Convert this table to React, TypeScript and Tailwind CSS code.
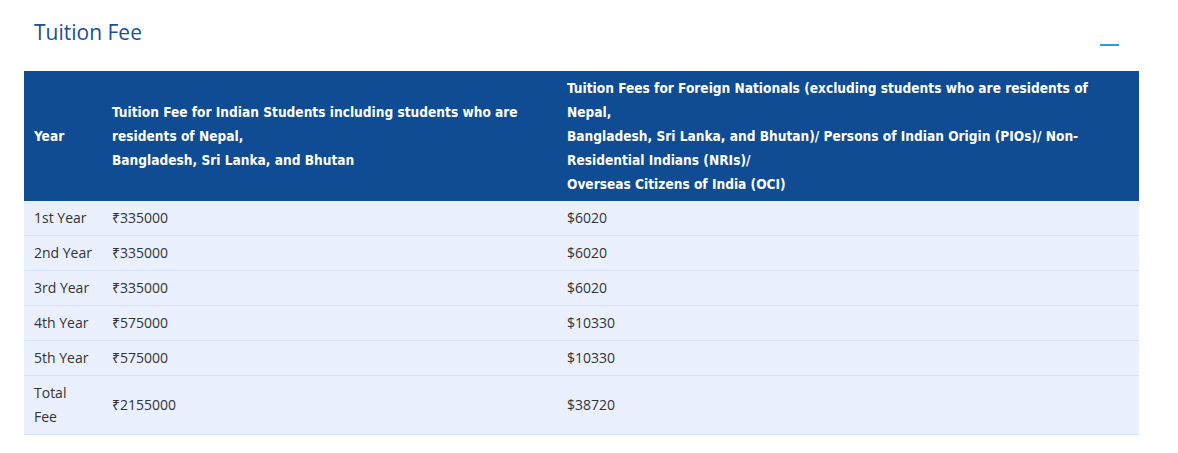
import { Minus } from 'lucide-react'

const ROWS = [
  { year: '1st Year', inr: '₹335000', usd: '$6020' },
  { year: '2nd Year', inr: '₹335000', usd: '$6020' },
  { year: '3rd Year', inr: '₹335000', usd: '$6020' },
  { year: '4th Year', inr: '₹575000', usd: '$10330' },
  { year: '5th Year', inr: '₹575000', usd: '$10330' },
  { year: 'Total Fee', inr: '₹2155000', usd: '$38720' },
]

export default function App() {
  return (
    <div className="min-h-[453px] w-[1178px] bg-white font-['Open_Sans','Noto_Sans',sans-serif]">
      <div className="pl-[24px] pr-[39px] pt-[18px]">
        <div className="flex items-start justify-between">
          <h2 className="pl-[10px] text-[21px] leading-[28px] text-[#1a4f92]">
            Tuition Fee
          </h2>
          <span className="mt-[26px] mr-[20px] block h-[2px] w-[19px] bg-[#2a9cd8]" />
        </div>

        <table className="mt-[25px] w-[1115px] table-fixed border-collapse text-[14px] leading-[24px]">
          <colgroup>
            <col className="w-[78px]" />
            <col className="w-[455px]" />
            <col className="w-[582px]" />
          </colgroup>
          <thead>
            <tr className="bg-[#0f4c94] text-left font-['DejaVu_Sans_Condensed',sans-serif] text-[13.6px] font-bold text-white">
              <th className="px-[10px] py-[5px] align-middle">Year</th>
              <th className="px-[10px] py-[5px] align-middle">
                Tuition Fee for Indian Students including students who are residents of Nepal,
                <br />
                Bangladesh, Sri Lanka, and Bhutan
              </th>
              <th className="px-[10px] py-[5px] align-middle">
                Tuition Fees for Foreign Nationals (excluding students who are residents of Nepal,
                <br />
                Bangladesh, Sri Lanka, and Bhutan)/ Persons of Indian Origin (PIOs)/ Non-Residential Indians (NRIs)/
                <br />
                Overseas Citizens of India (OCI)
              </th>
            </tr>
          </thead>
          <tbody className="text-[#333]">
            {ROWS.map((r) => (
              <tr key={r.year} className="border-b border-[#d6e2f0] bg-[#eaf0fd]">
                <td className="px-[10px] py-[5px] align-middle">{r.year}</td>
                <td className="px-[10px] py-[5px] align-middle">{r.inr}</td>
                <td className="px-[10px] py-[5px] align-middle">{r.usd}</td>
              </tr>
            ))}
          </tbody>
        </table>
      </div>
    </div>
  )
}
